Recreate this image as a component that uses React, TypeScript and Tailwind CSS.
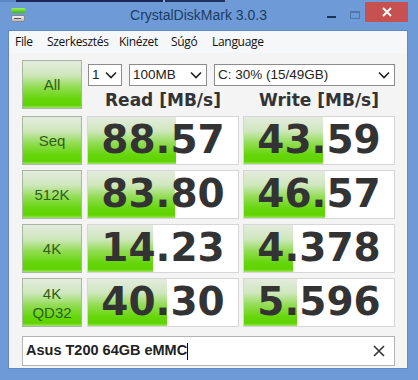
import React from 'react';

const rows = [
  { label: 'Seq', read: '88.57', write: '43.59', rw: 88, ww: 79 },
  { label: '512K', read: '83.80', write: '46.57', rw: 87, ww: 81 },
  { label: '4K', read: '14.23', write: '4.378', rw: 65, ww: 49 },
  { label: '4K QD32', read: '40.30', write: '5.596', rw: 79, ww: 53 },
];

const menu = [
  { t: 'File', w: 'w-[32px]' },
  { t: 'Szerkesztés', w: 'w-[72px]' },
  { t: 'Kinézet', w: 'w-[52px]' },
  { t: 'Súgó', w: 'w-[41px]' },
  { t: 'Language', w: 'w-[60px]' },
];

const green =
  'bg-[linear-gradient(to_bottom,#e4ebdf_0%,#cfe7bd_30%,#93dd55_55%,#66d60d_80%,#5fd300_94%,#9fe46a_100%)]';

const GreenButton = ({ label }: { label: string }) => (
  <div
    className={`w-[60px] h-[49px] shrink-0 border border-[#a8b8a0] flex flex-col items-center justify-center text-[#2f5f14] text-[15px] leading-[19px] ${green}`}
  >
    {label.split(' ').map((t) => (
      <span key={t}>{t}</span>
    ))}
  </div>
);

const Cell = ({ value, fill }: { value: string; fill: number }) => (
  <div
    className={`w-[152px] h-[49px] border border-[#d6d6d6] bg-white bg-no-repeat flex items-center justify-center font-['DejaVu_Sans',sans-serif] font-bold text-[39px] text-[#333333] ${green}`}
    style={{ backgroundSize: `${fill}px 100%`, backgroundColor: '#ffffff' }}
  >
    {value}
  </div>
);

const Chevron = () => (
  <svg width="12" height="8" viewBox="0 0 12 8" className="shrink-0">
    <path d="M1 1.5 L6 6.5 L11 1.5" fill="none" stroke="#222" strokeWidth="1.6" />
  </svg>
);

const Select = ({ text, w }: { text: string; w: string }) => (
  <div className={`${w} h-[22px] border border-[#8c8c8c] bg-white flex items-center justify-between pl-[3px] pr-[4px] text-[13.5px] text-[#222]`}>
    <span>{text}</span>
    <Chevron />
  </div>
);

export default function App() {
  return (
    <div className="w-[418px] h-[380px] bg-[#6e9bd7] flex flex-col overflow-hidden font-['Liberation_Sans',Arial,sans-serif]">
      {/* desktop strip */}
      <div className="h-[2px] flex shrink-0">
        <div className="w-[16px] bg-[#5d86c4]" />
        <div className="w-[147px] bg-[#1c2757]" />
        <div className="w-[2px] bg-[#8aa8d8]" />
        <div className="w-[60px] bg-[#22305f]" />
        <div className="flex-1 bg-[#6e9bd7]" />
      </div>

      {/* title bar */}
      <div className="h-[28px] shrink-0 flex items-start">
        <div className="w-[30px] h-[26px] flex flex-col items-center justify-center gap-[2px] pl-[6px]">
          <div className="w-[15px] h-[5px] rounded-[2px] bg-[linear-gradient(to_bottom,#9cf25a,#3fb80c)]" />
          <div className="w-[14px] h-[7px] rounded-[2px] bg-[linear-gradient(to_bottom,#f2f2f2,#b8b8b8)] border border-[#8a8a8a] flex items-center pl-[2px]">
            <div className="w-[7px] h-[1px] bg-[#555]" />
          </div>
        </div>
        <div className="flex-1 h-[26px] flex items-center justify-center pl-[50px] text-[14px] text-[#1d3b63]">
          CrystalDiskMark 3.0.3
        </div>
        <div className="w-[28px] h-[26px] flex items-center justify-center">
          <div className="w-[9px] h-[2px] bg-[#1d3354] mt-[4px]" />
        </div>
        <div className="w-[20px] h-[26px] flex items-center justify-center">
          <div className="w-[10px] h-[8px] border border-[#5376a8] border-t-2" />
        </div>
        <div className="w-[43px] h-[20px] mr-[10px] bg-[#c75050] flex items-center justify-center">
          <svg width="10" height="10" viewBox="0 0 10 10">
            <path d="M1 1 L9 9 M9 1 L1 9" stroke="#fff" strokeWidth="2" />
          </svg>
        </div>
      </div>

      {/* client */}
      <div className="flex-1 ml-[8px] mr-[10px] mb-[11px] bg-[#f4f4f4] border border-[#5f88c4] flex flex-col">
        {/* menu */}
        <div className="h-[22px] shrink-0 bg-[#f6f7f9] flex items-center pl-[6px] font-['Open_Sans',sans-serif] text-[12px] text-[#111]">
          {menu.map((m) => (
            <span key={m.t} className={`${m.w} whitespace-nowrap tracking-[-0.3px]`}>
              {m.t}
            </span>
          ))}
        </div>

        <div className="flex flex-col pl-[13px] pt-[7px] gap-[5px]">
          <div className="flex gap-[5px]">
            <GreenButton label="All" />
            <div className="flex flex-col">
              <div className="flex gap-[7px] mt-[4px] ml-[1px]">
                <Select text="1" w="w-[34px]" />
                <Select text="100MB" w="w-[78px]" />
                <Select text="C: 30% (15/49GB)" w="w-[181px]" />
              </div>
              <div className="flex gap-[4px] mt-[3px] font-['DejaVu_Sans',sans-serif] font-bold text-[17px] text-[#333] leading-[22px]">
                <div className="w-[152px] text-center">Read [MB/s]</div>
                <div className="w-[152px] text-center">Write [MB/s]</div>
              </div>
            </div>
          </div>

          {rows.map((r) => (
            <div key={r.label} className="flex gap-[5px]">
              <GreenButton label={r.label} />
              <div className="flex gap-[4px]">
                <Cell value={r.read} fill={r.rw} />
                <Cell value={r.write} fill={r.ww} />
              </div>
            </div>
          ))}

          <div className="mt-[4px] w-[373px] h-[30px] border border-[#b4b4b4] bg-white flex items-center justify-between pl-[3px] pr-[9px]">
            <div className="flex items-center font-bold text-[14.5px] text-[#222]">
              Asus T200 64GB eMMC
              <div className="w-[1px] h-[17px] bg-black" />
            </div>
            <svg width="12" height="12" viewBox="0 0 12 12">
              <path d="M1 1 L11 11 M11 1 L1 11" stroke="#333" strokeWidth="1.6" />
            </svg>
          </div>
        </div>
      </div>
    </div>
  );
}
